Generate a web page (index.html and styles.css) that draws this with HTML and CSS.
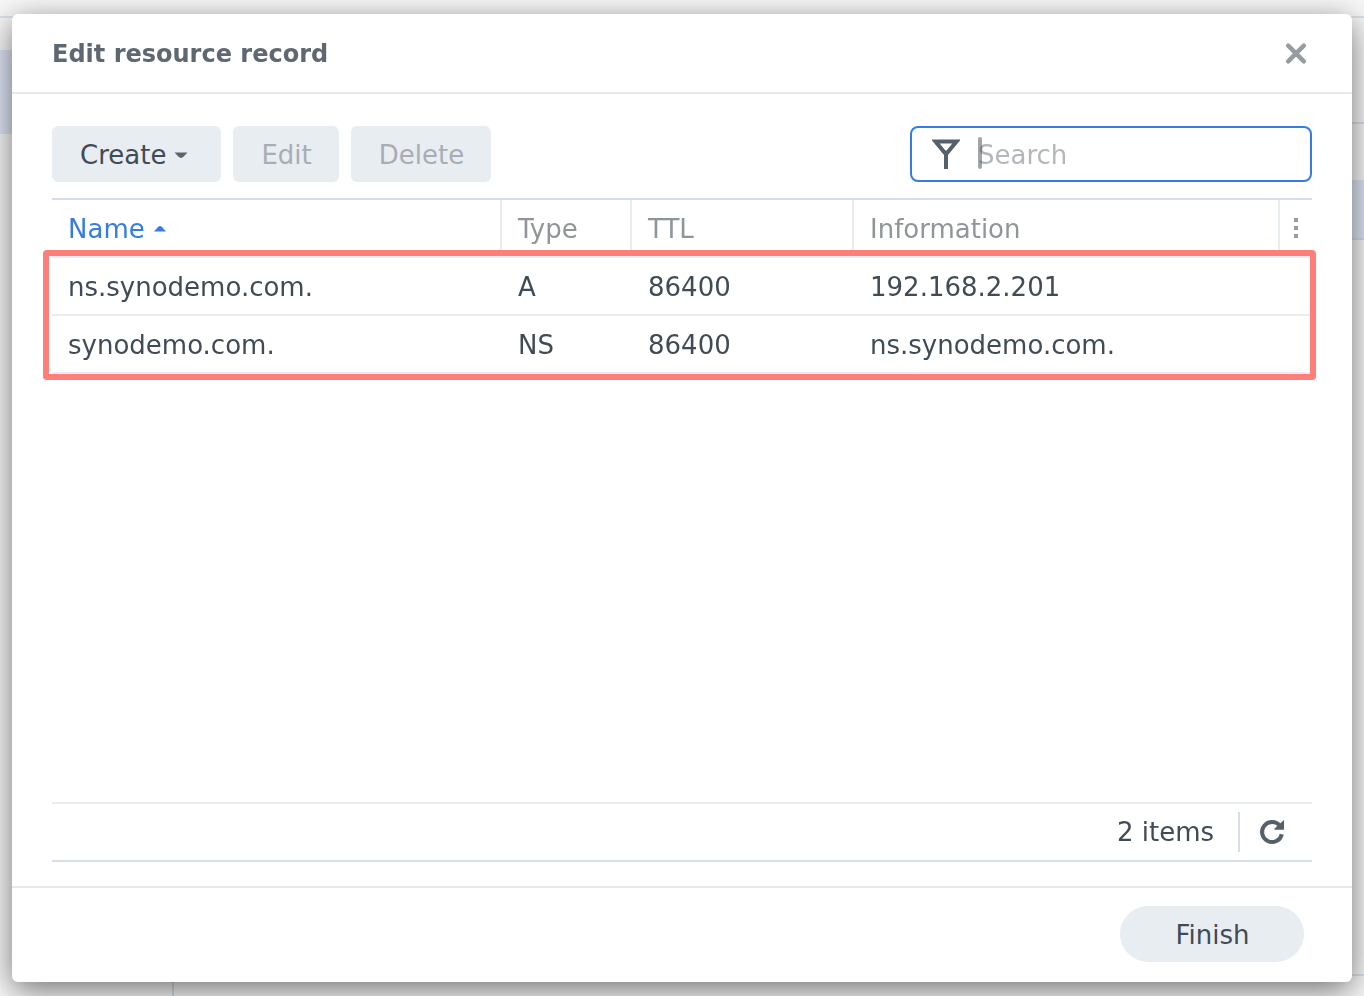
FILE: index.html
```html
<!DOCTYPE html>
<html lang="en">
<head>
<meta charset="utf-8">
<meta name="viewport" content="width=device-width, initial-scale=1">
<title>Edit resource record</title>
<link rel="stylesheet" href="styles.css">
</head>
<body>
<div class="backdrop" aria-hidden="true">
  <div class="backdrop-bar"></div>
  <div class="backdrop-body">
    <div class="backdrop-nav"><div class="backdrop-nav-item"></div></div>
    <div class="backdrop-main">
      <div class="backdrop-tools"></div>
      <div class="backdrop-row"></div>
      <div class="backdrop-rest"></div>
      <div class="backdrop-status"></div>
    </div>
  </div>
</div>
<main class="dialog" role="dialog" aria-labelledby="dialog-title">
  <header class="dialog-header">
    <h1 class="dialog-title" id="dialog-title">Edit resource record</h1>
    <button class="icon-button" type="button" aria-label="Close">
      <svg class="icon-close" viewBox="0 0 32 32" width="32" height="32"><path d="M8.200 7.700L23.800 23.300M23.800 7.700L8.200 23.300"/></svg>
    </button>
  </header>
  <section class="dialog-body">
    <div class="toolbar">
      <button class="button with-menu" type="button">Create
        <svg class="menu-arrow" viewBox="0 0 14 8" width="14" height="8"><path d="M0.500 1.500h13L9.500 5.800q-2.500 2.200-5 0z"/></svg>
      </button>
      <button class="button" type="button" disabled>Edit</button>
      <button class="button" type="button" disabled>Delete</button>
      <div class="search">
        <svg class="icon-filter" viewBox="0 0 28 32" width="28" height="32"><path class="funnel" d="M3.500 3.500h21L15.500 14.500h-3z"/><path class="stem" d="M14 14v17"/></svg>
        <div class="search-field">
          <input class="search-input" type="text" placeholder="Search" aria-label="Search">
          <span class="caret"></span>
        </div>
      </div>
    </div>
    <div class="grid">
      <table class="records">
        <colgroup><col class="col-name"><col class="col-type"><col class="col-ttl"><col><col class="col-menu"></colgroup>
        <thead>
          <tr>
            <th class="sorted" scope="col" aria-sort="ascending"><span class="sort-label">Name <svg class="sort-arrow" viewBox="0 0 12 8" width="12" height="8"><path d="M0 6.500h12L8 2q-2-2-4 0z"/></svg></span></th>
            <th scope="col">Type</th>
            <th scope="col">TTL</th>
            <th scope="col">Information</th>
            <th class="menu-cell" scope="col"><button class="icon-button" type="button" aria-label="Columns"><svg class="icon-dots" viewBox="0 0 32 32" width="32" height="32"><path d="M14 6h4v4h-4zM14 14h4v4h-4zM14 22h4v4h-4z"/></svg></button></th>
          </tr>
        </thead>
        <tbody>
          <tr><td>ns.synodemo.com.</td><td>A</td><td>86400</td><td colspan="2">192.168.2.201</td></tr>
          <tr><td>synodemo.com.</td><td>NS</td><td>86400</td><td colspan="2">ns.synodemo.com.</td></tr>
        </tbody>
      </table>
      <div class="highlight"></div>
      <div class="grid-footer">
        <span class="count">2 items</span>
        <button class="icon-button" type="button" aria-label="Refresh">
          <svg class="icon-refresh" viewBox="0 0 32 32" width="32" height="32"><path class="ring" d="M25.800 18.200A10 10 0 1 1 24 10"/><path class="tip" d="M28 4v9.800H18.500V12.500z"/></svg>
        </button>
      </div>
    </div>
  </section>
  <footer class="dialog-footer"><button class="button primary" type="button">Finish</button></footer>
</main>
</body>
</html>
```
FILE: styles.css
```css
* { box-sizing: border-box; }

body {
  margin: 0;
  background: #fff;
  color: #414b55;
  font: 26px/32px Verdana, "DejaVu Sans", sans-serif;
}

button, input { font: inherit; color: inherit; }

svg { display: block; flex-shrink: 0; }

/* Window behind the dialog */
.backdrop {
  position: fixed;
  inset: 0;
  display: flex;
  flex-direction: column;
  background: #f8f8f8;
}
.backdrop-bar { height: 18px; border-bottom: 2px solid #dbe2ea; }
.backdrop-body { flex: 1; display: flex; }
.backdrop-nav { width: 174px; padding-top: 32px; border-right: 2px solid #d5dde6; }
.backdrop-nav-item { height: 84px; background: #dfe6f5; }
.backdrop-main { flex: 1; display: flex; flex-direction: column; }
.backdrop-tools { height: 106px; margin-bottom: 56px; border-bottom: 2px solid #dbe2ea; }
.backdrop-row { height: 60px; background: #dfe6f5; border-bottom: 2px solid #d5dcea; }
.backdrop-rest { flex: 1; }
.backdrop-status { height: 22px; border-top: 2px solid #dbe2ea; }

/* Dialog */
.dialog {
  position: relative;
  display: flex;
  flex-direction: column;
  min-height: calc(100vh - 28px);
  margin: 14px 12px;
  background: #fff;
  border-radius: 6px;
  box-shadow: 0 8px 32px rgba(0, 0, 0, 0.55);
}
.dialog-header {
  display: flex;
  align-items: center;
  justify-content: space-between;
  height: 80px;
  padding: 2px 40px 0;
  border-bottom: 2px solid #e4e9ef;
}
.dialog-title { margin: 0; color: #5f6872; font-size: 24px; line-height: 32px; }
.dialog-body {
  flex: 1;
  display: flex;
  flex-direction: column;
  gap: 16px;
  padding: 32px 40px 24px;
}
.dialog-footer {
  display: flex;
  justify-content: flex-end;
  padding: 18px 48px 20px;
  border-top: 2px solid #e4e9ef;
}

/* Buttons */
.button {
  display: flex;
  align-items: center;
  justify-content: center;
  gap: 8px;
  height: 56px;
  padding: 2px 27px 0 28px;
  border: 0;
  border-radius: 6px;
  background: #e8edf2;
}
.button:disabled { color: #a8adb3; }
.with-menu { padding-right: 33px; }
.primary { width: 184px; border-radius: 28px; }
.menu-arrow { fill: #5a646e; }
.icon-button { display: block; padding: 0; border: 0; background: none; }

.icon-close { fill: none; stroke: #969ca1; stroke-width: 4.5; stroke-linecap: round; }
.icon-dots { fill: #969ca1; }
.icon-refresh .ring { fill: none; stroke: #56606a; stroke-width: 4; }
.icon-refresh .tip { fill: #56606a; }

/* Toolbar */
.toolbar { display: flex; gap: 12px; }
.search {
  display: flex;
  align-items: center;
  gap: 18px;
  width: 402px;
  height: 56px;
  margin-left: auto;
  padding: 0 20px;
  border: 2px solid #367ce2;
  border-radius: 8px;
}
.icon-filter { fill: none; stroke: #56606a; stroke-width: 4; }
.search-field { position: relative; flex: 1; display: flex; }
.search-input { flex: 1; min-width: 0; padding: 2px 0 0; border: 0; outline: 0; background: none; }
.search-input::placeholder { color: #b3b7bc; opacity: 1; }
.caret {
  position: absolute;
  top: 0;
  left: 0;
  width: 4px;
  height: 32px;
  border-radius: 2px;
  background: rgba(65, 75, 85, 0.5);
}

/* Records */
.grid {
  position: relative;
  flex: 1;
  display: flex;
  flex-direction: column;
  border-top: 2px solid #d8dee8;
  border-bottom: 2px solid #d8dee8;
}
.records { width: 100%; table-layout: fixed; border-collapse: separate; border-spacing: 0; }
.col-name { width: 450px; }
.col-type { width: 130px; }
.col-ttl { width: 222px; }
.col-menu { width: 32px; }
.records th, .records td {
  height: 58px;
  padding: 2px 0 0 16px;
  border-bottom: 2px solid #e8edf2;
  text-align: left;
  font-weight: normal;
}
.records th { border-right: 2px solid #e8edf2; color: #8f959a; }
.records .sorted { color: #367ce2; }
.records .menu-cell { padding: 0; border-right: 0; }
.sort-label { display: flex; align-items: center; gap: 9px; }
.sort-arrow { fill: #367ce2; }
.highlight {
  position: absolute;
  top: 50px;
  right: -4px;
  left: -9px;
  height: 130px;
  border: 6px solid #ff7e79;
  border-radius: 4px;
  pointer-events: none;
}
.grid-footer {
  display: flex;
  align-items: center;
  justify-content: flex-end;
  height: 58px;
  margin-top: auto;
  padding-right: 24px;
  border-top: 2px solid #e8edf2;
}
.count {
  margin-right: 16px;
  padding: 4px 24px 4px 0;
  border-right: 2px solid #d8dee8;
}
```
